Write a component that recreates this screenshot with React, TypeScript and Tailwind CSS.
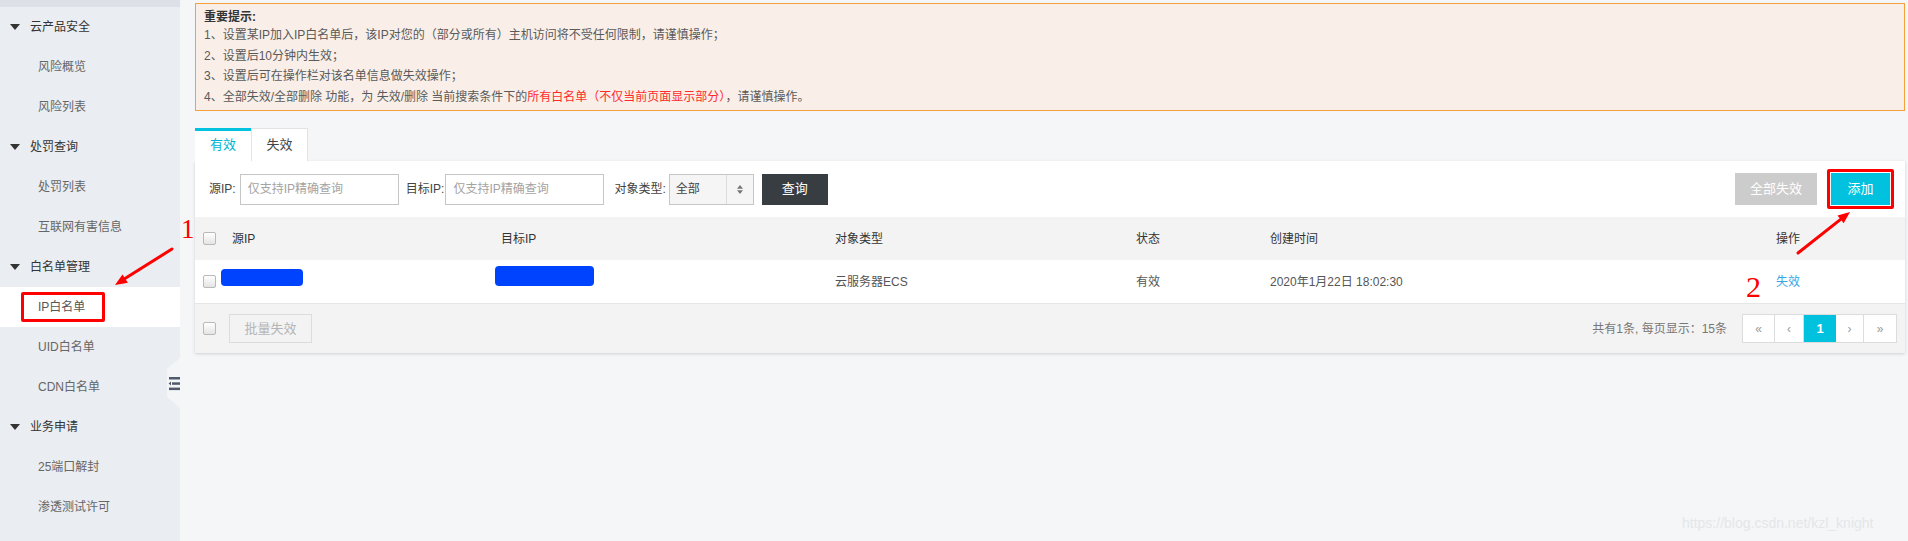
import React from "react";

const font = "font-['Liberation_Sans','Noto_Sans_CJK_SC',sans-serif]";

type MenuItem = { label: string; group?: boolean; active?: boolean };

const menu: MenuItem[] = [
  { label: "云产品安全", group: true },
  { label: "风险概览" },
  { label: "风险列表" },
  { label: "处罚查询", group: true },
  { label: "处罚列表" },
  { label: "互联网有害信息" },
  { label: "白名单管理", group: true },
  { label: "IP白名单", active: true },
  { label: "UID白名单" },
  { label: "CDN白名单" },
  { label: "业务申请", group: true },
  { label: "25端口解封" },
  { label: "渗透测试许可" },
];

function Checkbox() {
  return (
    <span className="block h-[13px] w-[13px] rounded-[2px] border border-[#b9b9b9] bg-gradient-to-b from-white to-[#e4e4e4]" />
  );
}

function Sidebar() {
  return (
    <aside className="relative w-[180px] shrink-0 bg-[#eaedf1]">
      <div className="h-[7px] bg-[#dde1e7]" />
      {menu.map((m) =>
        m.group ? (
          <div key={m.label} className="flex h-[40px] items-center pl-[10px] text-[#333]">
            <span className="h-0 w-0 border-l-[5px] border-r-[5px] border-t-[6px] border-l-transparent border-r-transparent border-t-[#333]" />
            <span className="ml-[10px]">{m.label}</span>
          </div>
        ) : m.active ? (
          <div key={m.label} className="flex h-[40px] items-center bg-white pl-[21px]">
            <span className="flex h-[30px] w-[84px] items-center rounded-[2px] border-[3px] border-[#ff0000] pl-[14px] text-[#555]">
              {m.label}
            </span>
          </div>
        ) : (
          <div key={m.label} className="flex h-[40px] items-center pl-[38px] text-[#666]">
            {m.label}
          </div>
        )
      )}
      <div className="absolute left-[167px] top-[358px] flex h-[50px] w-[13px] items-center justify-end bg-[#f4f5f7] [clip-path:polygon(100%_0,100%_100%,0_78%,0_22%)]">
        <svg width="12" height="15" viewBox="0 0 12 15">
          <rect x="1" y="1" width="11" height="2.5" fill="#4f5b6b" />
          <rect x="4" y="6.3" width="8" height="2.5" fill="#4f5b6b" />
          <path d="M3 5.6 L0.6 7.55 L3 9.5 Z" fill="#4f5b6b" />
          <rect x="1" y="11.6" width="11" height="2.5" fill="#4f5b6b" />
        </svg>
      </div>
    </aside>
  );
}

function Notice() {
  return (
    <div className="mt-[3px] h-[108px] border border-[#f5a03a] bg-[#f9efe8] pl-[8px] pt-[5px] text-[#5a5a5a]">
      <div className="font-bold leading-[16px] text-[#333]">重要提示:</div>
      <div className="leading-[20.5px]">1、设置某IP加入IP白名单后，该IP对您的（部分或所有）主机访问将不受任何限制，请谨慎操作；</div>
      <div className="leading-[20.5px]">2、设置后10分钟内生效；</div>
      <div className="leading-[20.5px]">3、设置后可在操作栏对该名单信息做失效操作；</div>
      <div className="leading-[20.5px]">
        4、全部失效/全部删除 功能，为 失效/删除 当前搜索条件下的
        <span className="text-[#ff2b2b]">所有白名单（不仅当前页面显示部分）</span>
        ，请谨慎操作。
      </div>
    </div>
  );
}

function Input() {
  return (
    <input
      className="h-[31px] w-[159px] border border-[#c6c6c6] bg-white pl-[7px] text-[12px] text-[#333] outline-none placeholder:text-[#a3a3a3]"
      placeholder="仅支持IP精确查询"
    />
  );
}

const cols = "grid grid-cols-[29px_269px_334px_301px_134px_506px_1fr] items-center pl-[8px]";

function Panel() {
  return (
    <div className="bg-white shadow-[0_1px_3px_rgba(0,0,0,0.15)]">
      <div className="flex h-[56px] items-center pl-[14px] pr-[11px] text-[#444]">
        <span className="mr-[4px]">源IP:</span>
        <Input />
        <span className="ml-[7px] mr-[1px]">目标IP:</span>
        <Input />
        <span className="ml-[10px] mr-[3px]">对象类型:</span>
        <div className="flex h-[31px] w-[85px] items-center border border-[#c6c6c6] bg-[#f5f5f5]">
          <span className="w-[57px] border-r border-[#dcdcdc] pl-[6px] leading-[29px]">全部</span>
          <span className="flex flex-1 items-center justify-center">
            <svg width="6" height="9" viewBox="0 0 6 9">
              <path d="M3 0 L6 3.8 L0 3.8 Z M0 5.2 L6 5.2 L3 9 Z" fill="#777" />
            </svg>
          </span>
        </div>
        <button className="ml-[8px] h-[31px] w-[66px] bg-[#373d41] text-[13px] text-white">查询</button>
        <div className="ml-auto flex items-center">
          <button className="h-[32px] w-[82px] bg-[#cccccc] text-[13px] text-white">全部失效</button>
          <div className="ml-[10px] rounded-[2px] border-[3px] border-[#ff0000] p-[1px]">
            <button className="block h-[32px] w-[59px] bg-[#00c1de] text-[13px] text-white">添加</button>
          </div>
        </div>
      </div>

      <div className={`${cols} h-[43px] bg-[#f3f3f3] text-[#333]`}>
        <Checkbox />
        <span>源IP</span>
        <span>目标IP</span>
        <span>对象类型</span>
        <span>状态</span>
        <span>创建时间</span>
        <span>操作</span>
      </div>

      <div className={`${cols} h-[44px] border-b border-[#e6e6e6] text-[#555]`}>
        <Checkbox />
        <span className="-ml-[11px] block h-[17px] w-[82px] -translate-y-[4px] rounded-[4px] bg-[#0043ff]" />
        <span className="-ml-[6px] block h-[20px] w-[99px] -translate-y-[6px] rounded-[4px] bg-[#0043ff]" />
        <span>云服务器ECS</span>
        <span>有效</span>
        <span>2020年1月22日 18:02:30</span>
        <span className="text-[#35a6e8]">失效</span>
      </div>

      <div className="flex h-[49px] items-center bg-[#f3f3f3] pl-[8px] pr-[8px]">
        <Checkbox />
        <button className="ml-[13px] h-[29px] w-[83px] border border-[#dcdcdc] text-[13px] text-[#b5b5b5]">批量失效</button>
        <span className="ml-auto mr-[15px] text-[#777]">共有1条, 每页显示：15条</span>
        <div className="flex h-[29px] border border-[#dcdcdc] bg-white text-[#999]">
          <span className="flex w-[32px] items-center justify-center border-r border-[#dcdcdc]">«</span>
          <span className="flex w-[29px] items-center justify-center border-r border-[#dcdcdc]">‹</span>
          <span className="flex w-[32px] items-center justify-center bg-[#00c1de] text-[13px] font-bold text-white">1</span>
          <span className="flex w-[28px] items-center justify-center border-r border-[#dcdcdc]">›</span>
          <span className="flex w-[32px] items-center justify-center">»</span>
        </div>
      </div>
    </div>
  );
}

export default function App() {
  return (
    <div className={`relative flex h-[541px] w-[1908px] overflow-hidden bg-[#f5f6f8] text-[12px] ${font}`}>
      <Sidebar />
      <main className="flex-1 pl-[15px] pr-[3px]">
        <Notice />
        <div className="mt-[17px] flex h-[33px]">
          <div className="flex w-[56px] items-center justify-center border-t-[3px] border-[#00c1de] bg-white pb-[3px] text-[13px] text-[#00b4d2]">有效</div>
          <div className="flex w-[57px] items-center justify-center border border-b-0 border-[#e3e3e3] bg-white text-[13px] text-[#444]">失效</div>
        </div>
        <Panel />
      </main>

      {/* annotations */}
      <svg className="pointer-events-none absolute left-0 top-0" width="1908" height="541">
        <line x1="172" y1="249" x2="125" y2="278.6" stroke="#ff0000" strokeWidth="3" strokeLinecap="round" />
        <polygon points="115,285 127.9,282.8 122.5,274.4" fill="#ff0000" />
        <line x1="1798" y1="253" x2="1840.6" y2="219.4" stroke="#ff0000" strokeWidth="3" strokeLinecap="round" />
        <polygon points="1850,212 1843.7,223.3 1837.5,215.5" fill="#ff0000" />
      </svg>
      <span className="pointer-events-none absolute left-[181px] top-[214px] font-['Liberation_Serif',serif] text-[27px] leading-[30px] text-[#ff0000]">1</span>
      <span className="pointer-events-none absolute left-[1746px] top-[271px] font-['Liberation_Serif',serif] text-[30px] leading-[32px] text-[#ff0000]">2</span>
      <span className="pointer-events-none absolute left-[1682px] top-[514px] font-['Liberation_Sans',sans-serif] text-[14px] leading-[18px] text-[#e4e6e9]">https://blog.csdn.net/kzl_knight</span>
    </div>
  );
}
